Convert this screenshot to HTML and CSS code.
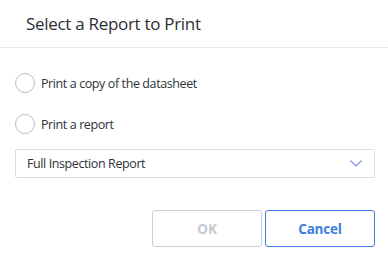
FILE: index.html
```html
<!DOCTYPE html>
<html lang="en">
<head>
  <meta charset="UTF-8">
  <title>Select a Report to Print</title>
  <link rel="stylesheet" href="styles.css">
</head>
<body>
  <div class="dialog">
    <div class="dialog-header">
      <h2>Select a Report to Print</h2>
    </div>
    <div class="dialog-body">
      <label class="radio-row">
        <span class="radio"></span>
        <span>Print a copy of the datasheet</span>
      </label>
      <label class="radio-row">
        <span class="radio"></span>
        <span>Print a report</span>
      </label>
      <div class="select">
        <span>Full Inspection Report</span>
        <svg width="12" height="7" viewBox="0 0 12 7">
          <polyline points="0.5,0.5 6,6 11.5,0.5" fill="none" stroke="#7f8be6" stroke-width="1.1"/>
        </svg>
      </div>
    </div>
    <div class="dialog-footer">
      <button type="button" class="btn btn-ok" disabled>OK</button>
      <button type="button" class="btn btn-cancel">Cancel</button>
    </div>
  </div>
</body>
</html>
```

FILE: styles.css
```css
body {
  font-family: 'Open Sans', 'Noto Sans', sans-serif;
  background: #fff;
  margin: 0;
  padding: 0;
}
.dialog {
  width: 388px;
  height: 267px;
  background: #fff;
}
.dialog-header {
  height: 48px;
  border-bottom: 1px solid #e8ebee;
  box-sizing: border-box;
  padding: 0 0 0 26px;
  display: flex;
  align-items: center;
}
h2 {
  margin: 0;
  font-size: 17px;
  font-weight: 400;
  color: #2b3035;
  letter-spacing: -0.3px;
}
.dialog-body {
  padding: 25px 13px 0 15px;
}
.radio-row {
  display: flex;
  align-items: center;
  gap: 6px;
  height: 20px;
  margin-bottom: 21px;
  font-size: 12.5px;
  letter-spacing: -0.4px;
  color: #2e3338;
}
.radio {
  width: 18px;
  height: 18px;
  border: 1px solid #b9bec3;
  border-radius: 50%;
  background: #fff;
}
.select {
  height: 29px;
  box-sizing: border-box;
  border: 1px solid #d8dde2;
  border-radius: 2px;
  display: flex;
  align-items: center;
  justify-content: space-between;
  padding: 0 12px 0 11px;
  font-size: 12.5px;
  letter-spacing: -0.4px;
  color: #2e3338;
  margin-top: -6px;
}
.dialog-footer {
  display: flex;
  justify-content: flex-end;
  gap: 3px;
  padding: 32px 13px 0 0;
}
.btn {
  width: 110px;
  height: 37px;
  background: #fff;
  border-radius: 3px;
  font-family: inherit;
  font-size: 13.5px;
  letter-spacing: -0.2px;
  font-weight: 700;
}
.btn-ok {
  border: 1px solid #c9cfd4;
  color: #c3cad0;
}
.btn-cancel {
  border: 1px solid #3f80e4;
  color: #3c7ddf;
}
```
